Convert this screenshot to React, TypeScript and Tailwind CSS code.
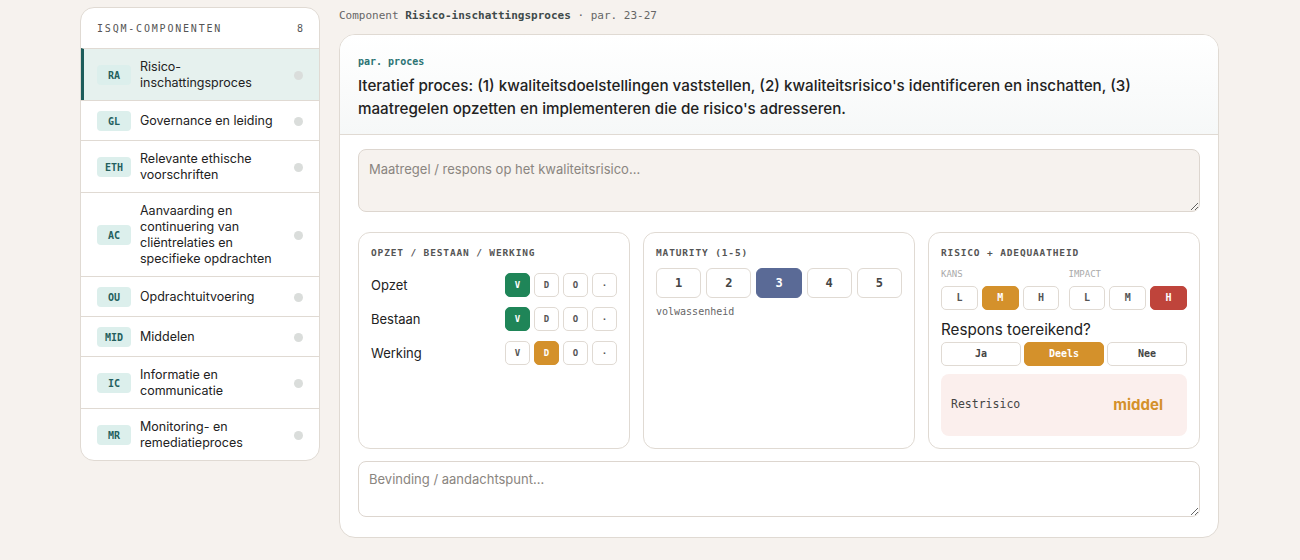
const mono = "font-['DejaVu_Sans_Mono','Liberation_Mono',monospace]";

const components = [
  { code: "RA", name: "Risico-inschattingsproces", active: true },
  { code: "GL", name: "Governance en leiding" },
  { code: "ETH", name: "Relevante ethische voorschriften" },
  { code: "AC", name: "Aanvaarding en continuering van cliëntrelaties en specifieke opdrachten" },
  { code: "OU", name: "Opdrachtuitvoering" },
  { code: "MID", name: "Middelen" },
  { code: "IC", name: "Informatie en communicatie" },
  { code: "MR", name: "Monitoring- en remediatieproces" },
];

const obw = [
  { label: "Opzet", value: "V" },
  { label: "Bestaan", value: "V" },
  { label: "Werking", value: "D" },
];

function Chip({ v, active }: { v: string; active: boolean }) {
  const color = active ? (v === "V" ? "bg-[#1f8558] border-[#1f8558] text-white" : "bg-[#d4912b] border-[#d4912b] text-white") : "bg-white border-[#e0dad3] text-[#555]";
  return (
    <button className={`${mono} flex h-[24px] w-[25px] items-center justify-center rounded-[5px] border text-[9px] font-semibold ${color}`}>
      {v}
    </button>
  );
}

function Level({ v, active, tone }: { v: string; active: boolean; tone: "amber" | "red" }) {
  const on = tone === "amber" ? "bg-[#d4912b] border-[#d4912b] text-white" : "bg-[#bf443b] border-[#bf443b] text-white";
  return (
    <button className={`${mono} flex h-[24px] flex-1 items-center justify-center rounded-[5px] border text-[10px] font-semibold ${active ? on : "border-[#e0dad3] bg-white text-[#555]"}`}>
      {v}
    </button>
  );
}

export default function App() {
  return (
    <div className="min-h-[560px] bg-[#f6f2ee] font-['Inter','Noto_Sans',sans-serif] text-[#222]">
      <div className="flex gap-[19px] pl-[80px] pr-[81px] pt-[7px]">
        {/* sidebar */}
        <aside className="w-[240px] shrink-0 self-start overflow-hidden rounded-[14px] border border-[#e0dad3] bg-white">
          <div className={`${mono} flex h-[40px] items-center justify-between px-[16px] text-[10px] text-[#555]`}>
            <span className="tracking-[0.18em]">ISQM-COMPONENTEN</span>
            <span>8</span>
          </div>
          {components.map((c) => (
            <div
              key={c.code}
              className={`flex items-center border-t border-[#e0dad3] pb-[9px] pr-[16px] pt-[10px] ${c.active ? "border-l-[3px] border-l-[#1d5c5a] bg-[#e6f1ee] pl-[13px]" : "pl-[16px]"}`}
            >
              <span className={`${mono} flex h-[20px] w-[34px] shrink-0 items-center justify-center rounded-[4px] bg-[#dcefec] text-[10px] font-bold text-[#245f5e]`}>
                {c.code}
              </span>
              <span className="ml-[9px] flex-1 text-[12.5px] leading-[16px] text-[#222]">{c.name}</span>
              <span className="ml-2 h-[9px] w-[9px] shrink-0 rounded-full bg-[#dadddb]" />
            </div>
          ))}
        </aside>

        {/* main */}
        <main className="flex-1">
          <p className={`${mono} pt-[2px] text-[11px] leading-[14px] text-[#666]`}>
            Component <b className="text-[#3f4a4a]">Risico-inschattingsproces</b> · par. 23-27
          </p>
          <section className="mt-[11px] overflow-hidden rounded-[16px] border border-[#e0dad3] bg-white">
            <div className="border-b border-[#e0dad3] bg-gradient-to-b from-white to-[#f6f8f8] px-[18px] pb-[14px] pt-[19px]">
              <p className={`${mono} text-[10px] font-bold text-[#2b7373]`}>par. proces</p>
              <p className="mt-[5px] text-[15.2px] font-medium leading-[23px] text-[#222]">
                Iteratief proces: (1) kwaliteitsdoelstellingen vaststellen, (2) kwaliteitsrisico's identificeren en inschatten, (3) maatregelen opzetten en implementeren die de risico's adresseren.
              </p>
            </div>

            <div className="flex flex-col gap-[13px] px-[18px] pb-[20px] pt-[14px]">
              <textarea
                placeholder="Maatregel / respons op het kwaliteitsrisico…"
                className="block h-[63px] w-full rounded-[8px] border border-[#ddd6cf] bg-[#f6f2ee] px-[10px] py-[10px] text-[13px] text-[#333] placeholder:text-[#8a8580] outline-none"
              />

              <div className="mt-[7px] grid grid-cols-3 gap-[13px]">
                {/* opzet */}
                <div className="rounded-[12px] border border-[#e0dad3] bg-white px-[12px] py-[13px]">
                  <p className={`${mono} text-[9.5px] font-bold tracking-[0.09em] text-[#555]`}>OPZET / BESTAAN / WERKING</p>
                  <div className="mt-[13px] flex flex-col gap-[10px]">
                    {obw.map((r) => (
                      <div key={r.label} className="flex items-center justify-between">
                        <span className="text-[13px]">{r.label}</span>
                        <div className="flex gap-[4px]">
                          {["V", "D", "O", "·"].map((v) => (
                            <Chip key={v} v={v} active={v === r.value} />
                          ))}
                        </div>
                      </div>
                    ))}
                  </div>
                </div>

                {/* maturity */}
                <div className="rounded-[12px] border border-[#e0dad3] bg-white px-[12px] py-[13px]">
                  <p className={`${mono} text-[9.5px] font-bold tracking-[0.09em] text-[#555]`}>MATURITY (1-5)</p>
                  <div className="mt-[8px] flex gap-[5px]">
                    {[1, 2, 3, 4, 5].map((n) => (
                      <button
                        key={n}
                        className={`${mono} flex h-[30px] flex-1 items-center justify-center rounded-[6px] border text-[12px] font-bold ${n === 3 ? "border-[#5a6a96] bg-[#5a6a96] text-white" : "border-[#e0dad3] bg-white text-[#444]"}`}
                      >
                        {n}
                      </button>
                    ))}
                  </div>
                  <p className={`${mono} mt-[6px] text-[10px] text-[#666]`}>volwassenheid</p>
                </div>

                {/* risico */}
                <div className="rounded-[12px] border border-[#e0dad3] bg-white px-[12px] pb-[12px] pt-[13px]">
                  <p className={`${mono} text-[9.5px] font-bold tracking-[0.09em] text-[#555]`}>RISICO + ADEQUAATHEID</p>
                  <div className="mt-[8px] flex gap-[9px]">
                    <div className="flex-1">
                      <p className={`${mono} text-[9px] text-[#aaa]`}>KANS</p>
                      <div className="mt-[4px] flex gap-[4px]">
                        {["L", "M", "H"].map((v) => (
                          <Level key={v} v={v} active={v === "M"} tone="amber" />
                        ))}
                      </div>
                    </div>
                    <div className="flex-1">
                      <p className={`${mono} text-[9px] text-[#aaa]`}>IMPACT</p>
                      <div className="mt-[4px] flex gap-[4px]">
                        {["L", "M", "H"].map((v) => (
                          <Level key={v} v={v} active={v === "H"} tone="red" />
                        ))}
                      </div>
                    </div>
                  </div>
                  <p className="mt-[10px] text-[15.2px] leading-[20px] text-[#222]">Respons toereikend?</p>
                  <div className="mt-[2px] flex gap-[3px]">
                    {["Ja", "Deels", "Nee"].map((v) => (
                      <button
                        key={v}
                        className={`${mono} flex h-[24px] flex-1 items-center justify-center rounded-[5px] border text-[10px] font-semibold ${v === "Deels" ? "border-[#d4912b] bg-[#d4912b] text-white" : "border-[#e0dad3] bg-white text-[#444]"}`}
                      >
                        {v}
                      </button>
                    ))}
                  </div>
                  <div className="mt-[8px] flex h-[62px] items-center justify-between rounded-[8px] bg-[#fbefed] pl-[10px] pr-[24px]">
                    <span className={`${mono} text-[11.5px] text-[#444]`}>Restrisico</span>
                    <span className="text-[15px] font-bold text-[#d4912b]">middel</span>
                  </div>
                </div>
              </div>

              <textarea
                placeholder="Bevinding / aandachtspunt…"
                className="-mt-[1px] block h-[56px] w-full rounded-[8px] border border-[#ddd6cf] bg-white px-[10px] py-[8px] text-[13px] text-[#333] placeholder:text-[#8a8580] outline-none"
              />
            </div>
          </section>
        </main>
      </div>
    </div>
  );
}
